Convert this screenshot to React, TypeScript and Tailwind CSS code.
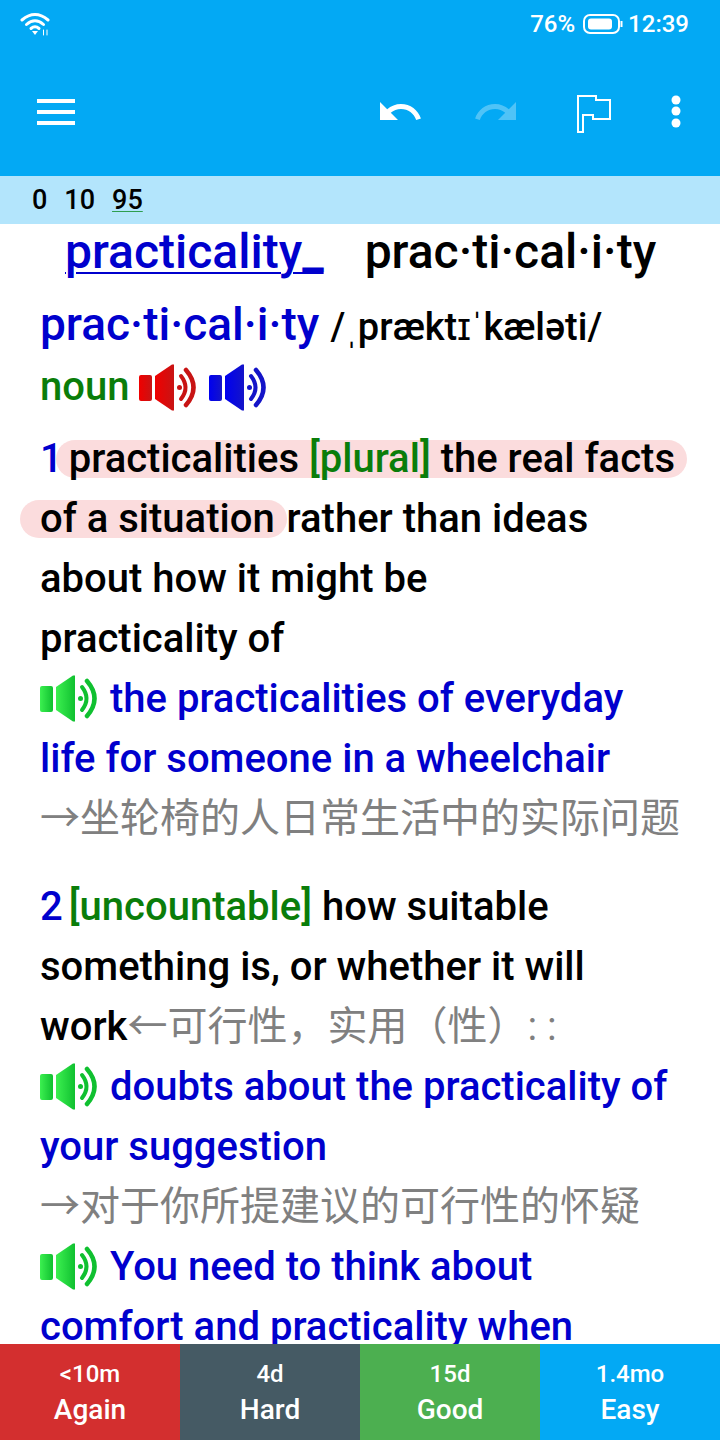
const BLUE = "text-[#0000cd]";

function Speaker({ id, light, dark, className = "" }: { id: string; light: string; dark: string; className?: string }) {
  return (
    <svg viewBox="0 0 58 47" width="58" height="47" className={"inline-block blur-[0.5px] " + className}>
      <defs>
        <linearGradient id={id} x1="0" y1="0" x2="1" y2="0">
          <stop offset="0" stopColor={light} />
          <stop offset="1" stopColor={dark} />
        </linearGradient>
      </defs>
      <rect x="0" y="11" width="13" height="26" rx="2" fill={`url(#${id})`} />
      <path d="M16 12 L33 0.5 L35 0.5 L35 46.5 L33 46.5 L16 35 Z" fill={`url(#${id})`} />
      <circle cx="40.5" cy="23.5" r="2.5" fill={dark} />
      <path d="M42 12 Q51 23.5 42 35" fill="none" stroke={dark} strokeWidth="4" strokeLinecap="round" />
      <path d="M47 6 Q62 23.5 47 41" fill="none" stroke={dark} strokeWidth="4.5" strokeLinecap="round" />
    </svg>
  );
}

function GreenSpeaker({ id }: { id: string }) {
  return <Speaker id={id} light="#3cf050" dark="#10c030" className="mr-[12px] align-[-10px]" />;
}

function Line({ children, className = "" }: { children: React.ReactNode; className?: string }) {
  return <div className={"h-[60px] leading-[60px] whitespace-nowrap " + className}>{children}</div>;
}

function Mark({ children, className = "" }: { children: React.ReactNode; className?: string }) {
  return <span className={"inline-block h-[38px] leading-[38px] bg-[#fbdcdd] rounded-full pr-[12px] -mr-[10px] " + className}>{children}</span>;
}

function AnswerButton({ time, label, color }: { time: string; label: string; color: string }) {
  return (
    <div className={"flex-1 flex flex-col items-center text-white font-medium " + color}>
      <span className="mt-[15px] text-[24px] leading-[30px]">{time}</span>
      <span className="mt-[6px] text-[28px] leading-[30px]">{label}</span>
    </div>
  );
}

export default function App() {
  return (
    <div className="w-[720px] h-[1440px] flex flex-col overflow-hidden bg-white font-['Roboto','Noto_Sans_CJK_SC',sans-serif] text-[40px] font-medium text-black">
      {/* status bar + toolbar */}
      <div className="h-[176px] bg-[#03a9f4] text-white shrink-0">
        <div className="h-[48px] flex items-center pl-[20px] pr-[31px]">
          <svg width="32" height="24" viewBox="0 0 32 24" fill="none" stroke="white" strokeLinecap="round">
            <path d="M2 8 Q15 -3 28 8" strokeWidth="3" />
            <path d="M6.5 12.5 Q15 5 23.5 12.5" strokeWidth="3" />
            <path d="M11 16.5 Q15 13 19 16.5" strokeWidth="3" />
            <path d="M12 19 L18 19 L15 23 Z" fill="white" stroke="none" />
            <path d="M23.5 18 V23 M27 18 V23" strokeWidth="1" />
          </svg>
          <span className="ml-auto text-[24px]">76%</span>
          <svg width="40" height="20" viewBox="0 0 40 20" className="ml-[8px]">
            <rect x="1" y="1" width="35" height="18" rx="6" fill="none" stroke="white" strokeWidth="2" />
            <rect x="5" y="4.5" width="24" height="11" rx="3" fill="white" />
            <rect x="37.5" y="7" width="2" height="6" fill="white" />
          </svg>
          <span className="ml-[5px] text-[24px]">12:39</span>
        </div>
        <div className="h-[128px] flex items-center">
          <svg width="38" height="26" viewBox="0 0 38 26" fill="white" className="ml-[37px]">
            <rect y="0" width="38" height="4" />
            <rect y="11" width="38" height="4" />
            <rect y="22" width="38" height="4" />
          </svg>
          <svg width="48" height="48" viewBox="0 0 24 24" fill="white" className="ml-[301px]">
            <path d="M12.5 8c-2.65 0-5.05.99-6.9 2.6L2 7v9h9l-3.62-3.62c1.39-1.16 3.16-1.88 5.12-1.88 3.54 0 6.55 2.31 7.6 5.5l2.37-.78C21.08 11.03 17.15 8 12.5 8z" />
          </svg>
          <svg width="48" height="48" viewBox="0 0 24 24" fill="white" className="ml-[48px] opacity-30">
            <path d="M18.4 10.6C16.55 8.99 14.15 8 11.5 8c-4.65 0-8.58 3.03-9.96 7.22L3.9 16c1.05-3.19 4.05-5.5 7.6-5.5 1.95 0 3.73.72 5.12 1.88L13 16h9V7l-3.6 3.6z" />
          </svg>
          <svg width="34" height="38" viewBox="0 0 34 38" fill="none" stroke="white" strokeWidth="2" className="ml-[57px] mt-[3px]">
            <path d="M1 37 V1 H19 V5 H33 V24 H16 V20 H6 V37 Z" />
          </svg>
          <svg width="10" height="34" viewBox="0 0 10 34" fill="white" className="ml-[60px]">
            <ellipse cx="5" cy="5" rx="4.5" ry="4.5" />
            <ellipse cx="5" cy="16" rx="4.5" ry="4.5" />
            <ellipse cx="5" cy="28" rx="4.5" ry="4.5" />
          </svg>
        </div>
      </div>

      {/* counts */}
      <div className="h-[48px] shrink-0 bg-[#b3e5fc] pl-[32px] flex items-center text-[27px] gap-[17px]">
        <span>0</span>
        <span>10</span>
        <span className="underline decoration-[#2e9e4f] decoration-1 underline-offset-2">95</span>
      </div>

      {/* card */}
      <div className="flex-1 overflow-hidden pl-[40px]">
        <div className="h-[56px] flex items-center text-[48px] leading-[56px] whitespace-nowrap pl-[25px]">
          <span className={BLUE + " underline decoration-2 underline-offset-4"}>practicality_</span>
          <span className="ml-[41px]">prac·ti·cal·i·ty</span>
        </div>
        <div className="mt-[14px] h-[60px] leading-[60px] whitespace-nowrap">
          <span className={BLUE + " text-[46px]"}>prac·ti·cal·i·ty</span>
          <span className="ml-[11px] text-[38px]">/ˌpræktɪˈkæləti/</span>
        </div>
        <div className="mt-[3px] h-[60px] leading-[60px] flex items-center whitespace-nowrap">
          <span className="text-[#0a7d0a]">noun</span>
          <Speaker id="red" light="#f00000" dark="#c81414" className="ml-[10px]" />
          <Speaker id="blue" light="#0000f0" dark="#1414c8" className="ml-[12px]" />
        </div>

        <div className="mt-[12px]">
          <Line>
            <span className={BLUE}>1</span>
            <Mark className="ml-[-7px] pl-[13px]">
              practicalities <span className="text-[#0a7d0a]">[plural]</span> the real facts
            </Mark>
          </Line>
          <Line>
            <Mark className="-ml-[20px] pl-[20px]">of a situation</Mark> rather than ideas
          </Line>
          <Line>about how it might be</Line>
          <Line>practicality of</Line>
          <Line className={BLUE}>
            <GreenSpeaker id="g1" />
            the practicalities of everyday
          </Line>
          <Line className={BLUE}>life for someone in a wheelchair</Line>
          <Line className="text-[#808080] font-normal">→坐轮椅的人日常生活中的实际问题</Line>
        </div>

        <div className="mt-[28px]">
          <Line>
            <span className={BLUE}>2</span>
            <span className="text-[#0a7d0a] ml-[6px]">[uncountable]</span> how suitable
          </Line>
          <Line>something is, or whether it will</Line>
          <Line>
            work<span className="text-[#808080] font-normal">←可行性，实用（性）: :</span>
          </Line>
          <Line className={BLUE}>
            <GreenSpeaker id="g2" />
            doubts about the practicality of
          </Line>
          <Line className={BLUE}>your suggestion</Line>
          <Line className="text-[#808080] font-normal">→对于你所提建议的可行性的怀疑</Line>
          <Line className={BLUE}>
            <GreenSpeaker id="g3" />
            You need to think about
          </Line>
          <Line className={BLUE}>comfort and practicality when</Line>
        </div>
      </div>

      {/* answer buttons */}
      <div className="h-[96px] shrink-0 flex">
        <AnswerButton time="<10m" label="Again" color="bg-[#d32f2f]" />
        <AnswerButton time="4d" label="Hard" color="bg-[#455a64]" />
        <AnswerButton time="15d" label="Good" color="bg-[#4caf50]" />
        <AnswerButton time="1.4mo" label="Easy" color="bg-[#03a9f4]" />
      </div>
    </div>
  );
}
